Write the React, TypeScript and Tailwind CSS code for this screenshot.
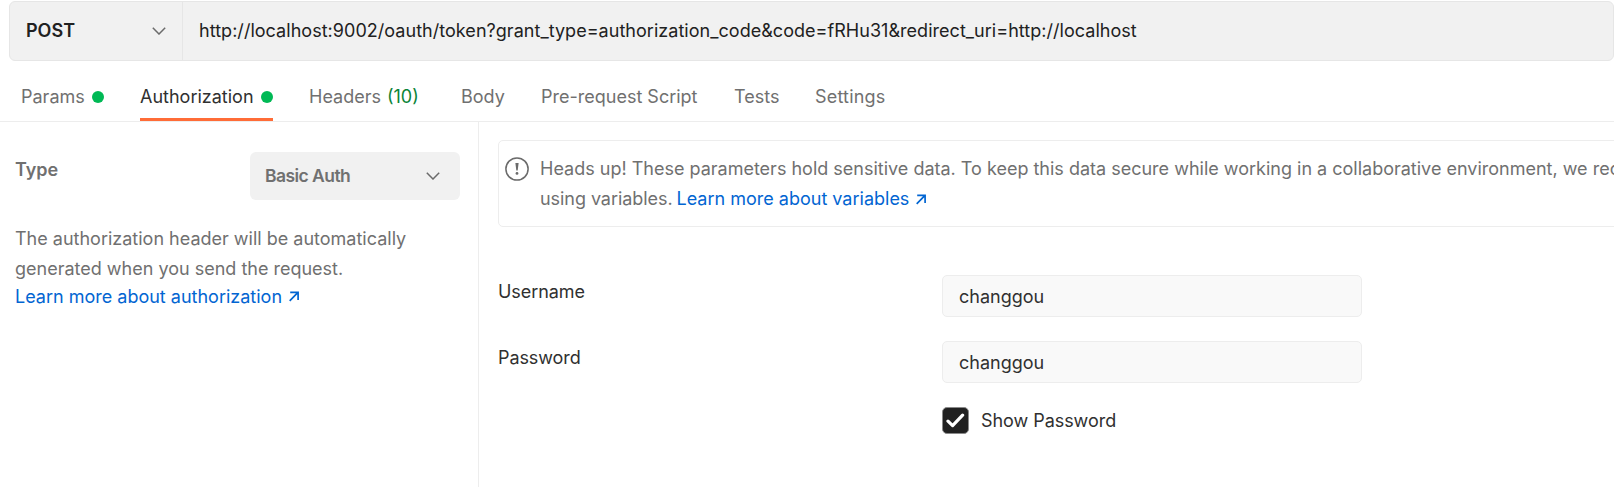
import React from "react";

function Chevron() {
  return (
    <svg width="14" height="8" viewBox="0 0 14 8" fill="none" stroke="#6b6b6b" strokeWidth="1.5">
      <path d="M0.8 0.8 L7 7 L13.2 0.8" />
    </svg>
  );
}

function ArrowUpRight() {
  return (
    <svg className="inline-block" width="10" height="11" viewBox="0 0 10 11" fill="none" stroke="#0265d2" strokeWidth="1.7">
      <path d="M1.2 1.3 H9.1 V9 M9 1.4 L0.7 9.8" />
    </svg>
  );
}

function Dot() {
  return <span className="size-3 shrink-0 rounded-full bg-[#00b955]" />;
}

function Field({ label, value }: { label: string; value: string }) {
  return (
    <div className="flex h-[66px]">
      <label className="w-[444px] pt-[3px] leading-[27px] tracking-[-0.08px] text-[#303030]">{label}</label>
      <input
        className="h-[42px] w-[420px] rounded-[5px] border border-[#ededed] bg-[#f9f9f9] px-4 text-[#303030] outline-none"
        defaultValue={value}
      />
    </div>
  );
}

export default function App() {
  return (
    <div className="flex h-[487px] w-[1614px] flex-col overflow-hidden bg-white font-[Inter,sans-serif] text-[18px] text-[#707070]">
      <div className="mt-px ml-[9px] flex h-[60px] shrink-0 rounded-[6px] border border-[#e6e6e6] bg-[#f1f1f1] text-[#212121]">
        <button className="flex w-[173px] items-center justify-between border-r border-[#e6e6e6] pr-4 pb-px pl-4 font-semibold">
          POST
          <Chevron />
        </button>
        <div className="flex items-center pb-[2px] pl-4 tracking-[0.034px]">
          http://localhost:9002/oauth/token?grant_type=authorization_code&amp;code=fRHu31&amp;redirect_uri=http://localhost
        </div>
      </div>

      <nav className="flex h-[61px] shrink-0 border-b border-[#ededed] pt-[14px] pl-[21px]">
        <div className="mr-[36px] flex h-[43px] w-[83px] items-center justify-between">Params<Dot /></div>
        <div className="mr-[36px] flex h-[46px] w-[133px] items-center justify-between border-b-3 border-[#ff6c37] text-[#303030]">
          Authorization<Dot />
        </div>
        <div className="flex h-[43px] w-[152px] items-center gap-[6px]">
          Headers<span className="text-[#0a8438]">(10)</span>
        </div>
        <div className="flex h-[43px] w-[80px] items-center">Body</div>
        <div className="flex h-[43px] w-[193px] items-center">Pre-request Script</div>
        <div className="flex h-[43px] w-[81px] items-center">Tests</div>
        <div className="flex h-[43px] items-center tracking-[0.2px]">Settings</div>
      </nav>

      <div className="flex min-h-0 flex-1">
        <aside className="w-[479px] shrink-0 border-r border-[#ededed] pt-[30px] pl-[15px]">
          <div className="flex h-12 items-start justify-between pr-[18px]">
            <span className="pt-1 leading-[27px] font-semibold">Type</span>
            <button className="flex h-12 w-[210px] items-center justify-between rounded-[6px] bg-[#f1f1f1] pr-5 pl-[15px] text-[17.5px] font-semibold tracking-[-0.55px]">
              Basic Auth
              <Chevron />
            </button>
          </div>
          <p className="mt-6 leading-[30px] whitespace-nowrap">
            The authorization header will be automatically
            <br />
            generated when you send the request.
          </p>
          <a className="flex h-[25px] items-center gap-[7px] text-[#0265d2]">
            Learn more about authorization <ArrowUpRight />
          </a>
        </aside>

        <main className="min-w-0 flex-1 pt-[18px] pl-[19px]">
          <div className="flex h-[87px] w-[1200px] rounded-[5px] border border-[#ededed] pt-[13px] pl-[6px]">
            <svg className="mt-[3px] mr-[11px] shrink-0" width="24" height="24" viewBox="0 0 24 24" fill="none" stroke="#6b6b6b" strokeWidth="1.5">
              <circle cx="12" cy="12" r="11.1" />
              <path d="M10.4 6 H13.6 L12.7 13.6 H11.3 Z" fill="#6b6b6b" stroke="none" />
              <circle cx="12" cy="16.4" r="1.4" fill="#6b6b6b" stroke="none" />
            </svg>
            <div className="leading-[30px] whitespace-nowrap">
              <p>
                Heads up! These parameters hold sensitive data. To keep this data secure while working in a collaborative environment, we recommend
              </p>
              <p className="flex items-center">
                <span className="mr-[4px] tracking-[-0.06px]">using variables.</span>
                <a className="flex items-center gap-[7px] text-[#0265d2]">Learn more about variables <ArrowUpRight /></a>
              </p>
            </div>
          </div>

          <div className="mt-12">
            <Field label="Username" value="changgou" />
            <Field label="Password" value="changgou" />
            <div className="ml-[444px] flex items-center gap-3 tracking-[-0.05px] text-[#303030]">
              <span className="flex size-[27px] items-center justify-center rounded-[5px] border border-[#8a8a8a] bg-[#212121] pr-px">
                <svg width="19" height="15" viewBox="0 0 19 15" fill="none" stroke="#fff" strokeWidth="3.2" strokeLinecap="round" strokeLinejoin="round">
                  <path d="M2 8.2 L6.6 12.6 L16.6 2.2" />
                </svg>
              </span>
              Show Password
            </div>
          </div>
        </main>
      </div>
    </div>
  );
}
